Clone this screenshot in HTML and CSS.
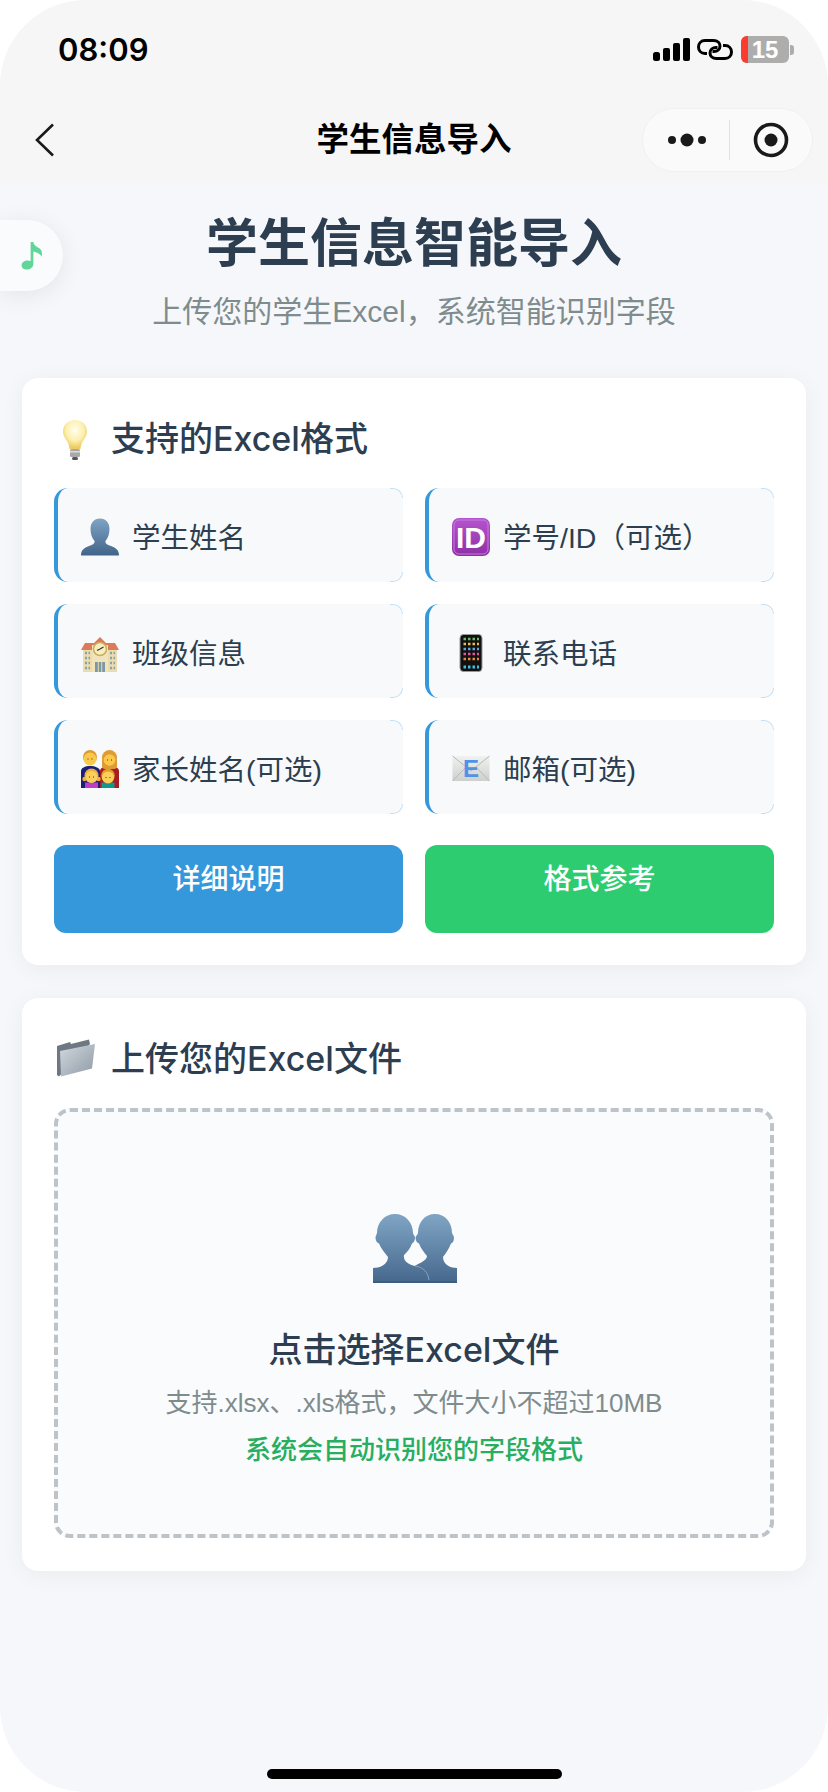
FILE: index.html
```html
<!DOCTYPE html>
<html lang="zh-CN">
<head>
    <meta charset="UTF-8">
    <meta name="viewport" content="width=device-width, initial-scale=1.0">
    <title>学生信息导入</title>
    <link rel="stylesheet" href="styles.css">
</head>
<body>
    <div class="phone">
        <div class="top-bar">
            <div class="status-bar">
                <span class="time">08:09</span>
                <div class="status-icons">
                    <svg class="signal" width="37" height="23" viewBox="0 0 37 23">
                        <rect x="0" y="14" width="7" height="9" rx="2.5" fill="#000"/>
                        <rect x="10" y="10" width="7" height="13" rx="2" fill="#000"/>
                        <rect x="20" y="5" width="7" height="18" rx="2" fill="#000"/>
                        <rect x="30" y="0" width="7" height="23" rx="2" fill="#000"/>
                    </svg>
                    <svg class="link" width="36" height="21" viewBox="0 0 36 21" fill="none" stroke="#000" stroke-width="3">
                        <path d="M10 14.500H8C4 14.500 1.500 11.500 1.500 8S4 1.500 8 1.500H16.500C20.500 1.500 23 4 23 7S20.500 12.500 17 12.500H15.500"/>
                        <path d="M26 6.500H28C32 6.500 34.500 9.500 34.500 13S32 19.500 28 19.500H19.500C15.500 19.500 13 17 13 14S15.500 8.500 19 8.500H20.500"/>
                    </svg>
                    <div class="battery"><span class="battery-low"></span><span class="battery-num">15</span></div>
                    <span class="battery-tip"></span>
                </div>
            </div>
            <div class="nav-bar">
                <svg class="back" width="20" height="34" viewBox="0 0 20 34" fill="none" stroke="#1a1a1a" stroke-width="2.6">
                    <path d="M18 1.500L2 17L18 32.500"/>
                </svg>
                <div class="nav-title">学生信息导入</div>
                <div class="capsule">
                    <div class="capsule-side">
                        <svg width="38" height="14" viewBox="0 0 38 14" fill="#1a1a1a">
                            <circle cx="4" cy="7" r="4"/><circle cx="19" cy="7" r="6.500"/><circle cx="34" cy="7" r="4"/>
                        </svg>
                    </div>
                    <div class="capsule-line"></div>
                    <div class="capsule-side">
                        <svg width="36" height="36" viewBox="0 0 36 36">
                            <circle cx="18" cy="18" r="15.500" fill="none" stroke="#1a1a1a" stroke-width="3.600"/>
                            <circle cx="18" cy="18" r="6.500" fill="#1a1a1a"/>
                        </svg>
                    </div>
                </div>
            </div>
        </div>

        <div class="music-btn">
            <svg width="22" height="29" viewBox="0 0 24 32" fill="#5fd69a">
                <path d="M10.500 1H13.500C14 5 17 6 20 8C23 10 23.500 13.500 22.500 17.500C21.500 14 18 12.500 13.500 11.500V25C13.500 29 10 31.500 6 31.500C2.500 31.500 0.500 29.500 0.500 27C0.500 23.500 4 21.500 7 21.500C8.500 21.500 9.500 21.700 10.500 22.200Z"/>
            </svg>
        </div>

        <div class="page">
            <h1 class="page-title">学生信息智能导入</h1>
            <p class="page-sub">上传您的学生Excel，系统智能识别字段</p>

            <section class="card">
                <div class="card-head">
                    <svg class="head-icon" width="38" height="42" viewBox="0 0 38 42">
                        <defs>
                            <radialGradient id="bulbGlow" cx="50%" cy="35%" r="60%">
                                <stop offset="0" stop-color="#fffef0"/><stop offset=".6" stop-color="#fdf0b0"/><stop offset="1" stop-color="#eecb62"/>
                            </radialGradient>
                        </defs>
                        <path d="M19 1C26 1 31 6 31 12.500C31 18 27 21 25.500 25C25 27 24.500 28.500 24.500 30H13.500C13.500 28.500 13 27 12.500 25C11 21 7 18 7 12.500C7 6 12 1 19 1Z" fill="url(#bulbGlow)"/>
                        <rect x="14" y="30" width="10" height="8" rx="1.500" fill="#a8a8a8"/>
                        <rect x="14" y="32" width="10" height="1.500" fill="#dcdcdc"/>
                        <rect x="16" y="38" width="6" height="3" rx="1.500" fill="#555"/>
                    </svg>
                    <h2>支持的Excel格式</h2>
                </div>
                <div class="field-grid">
                    <div class="field">
                        <svg class="field-icon" width="38" height="38" viewBox="0 0 38 38">
                            <defs>
                                <linearGradient id="bustFill" x1="0" y1="0" x2="0" y2="1">
                                    <stop offset="0" stop-color="#7fa4c4"/><stop offset="1" stop-color="#41648a"/>
                                </linearGradient>
                            </defs>
                            <path d="M19 0.500C25 0.500 28.500 5 28.500 11C28.500 16 27 20 24.500 23C24 25.500 26 26.500 30 28C35 30 38 32 38 37.500H0C0 32 3 30 8 28C12 26.500 14 25.500 13.500 23C11 20 9.500 16 9.500 11C9.500 5 13 0.500 19 0.500Z" fill="url(#bustFill)"/>
                        </svg>
                        <span>学生姓名</span>
                    </div>
                    <div class="field">
                        <svg class="field-icon" width="38" height="38" viewBox="0 0 38 38">
                            <defs>
                                <linearGradient id="idFill" x1="0" y1="0" x2="0" y2="1">
                                    <stop offset="0" stop-color="#b455cf"/><stop offset="1" stop-color="#8f2fa6"/>
                                </linearGradient>
                            </defs>
                            <rect width="38" height="38" rx="7" fill="url(#idFill)"/>
                            <rect x="2" y="2" width="34" height="34" rx="5" fill="none" stroke="#c77bdc" stroke-width="1"/>
                            <text class="id-text" x="19" y="29.500" text-anchor="middle">ID</text>
                        </svg>
                        <span>学号/ID（可选）</span>
                    </div>
                    <div class="field">
                        <svg class="field-icon" width="38" height="38" viewBox="0 -2 38 38">
                            <rect x="2" y="10" width="34" height="26" fill="#ebdcae"/>
                            <path d="M0 14L4 7H13L19 1L25 7H34L38 14Z" fill="#dd7a5a"/>
                            <rect x="11" y="9" width="16" height="27" fill="#f1e4bb"/>
                            <circle cx="19" cy="13" r="6.500" fill="#f7efc0" stroke="#c9ae5c" stroke-width="1.500"/>
                            <path d="M19 13L22.500 11M19 13L16 14.500" stroke="#333" stroke-width="1.200"/>
                            <rect x="14" y="26" width="10" height="10" fill="#7e97a6"/>
                            <path d="M17.300 26V36M20.700 26V36" stroke="#ebdcae" stroke-width="1"/>
                            <path d="M4 17H9M4 22H9M4 27H9M4 32H9M29 17H34M29 22H34M29 27H34M29 32H34" stroke="#8aa0ab" stroke-width="2.500" stroke-dasharray="2 1.500"/>
                        </svg>
                        <span>班级信息</span>
                    </div>
                    <div class="field">
                        <svg class="field-icon" width="38" height="38" viewBox="0 0 38 38">
                            <rect x="8" y="0.500" width="22" height="37" rx="3.500" fill="#111" stroke="#999" stroke-width="1"/>
                            <path d="M11.500 5H14M16 5H18.500M20.500 5H23M25 5H27" stroke="#6fb86a" stroke-width="2.500"/>
                            <path d="M11.500 10H14M16 10H18.500M20.500 10H23M25 10H27" stroke="#e6c04e" stroke-width="2.500"/>
                            <path d="M11.500 15H14M16 15H18.500M20.500 15H23M25 15H27" stroke="#5aa7e0" stroke-width="2.500"/>
                            <path d="M11.500 20H14M16 20H18.500M20.500 20H23M25 20H27" stroke="#e0579b" stroke-width="2.500"/>
                            <path d="M11.500 25H14M16 25H18.500M20.500 25H23M25 25H27" stroke="#e8873c" stroke-width="2.500"/>
                            <path d="M11.500 33H14M16 33H18.500M20.500 33H23M25 33H27" stroke="#43c0d8" stroke-width="3"/>
                        </svg>
                        <span>联系电话</span>
                    </div>
                    <div class="field">
                        <svg class="field-icon" width="38" height="38" viewBox="0 0 38 38">
                            <path d="M0 38V21C0 18 4 16 9 16S19 18 19 21V38Z" fill="#1c1f7a"/>
                            <path d="M19 38V21C19 18 23 16 28.500 16S38 18 38 21V38Z" fill="#a81d22"/>
                            <rect x="21" y="8" width="15" height="11" rx="3" fill="#de9a34"/>
                            <circle cx="9" cy="7" r="7" fill="#dd9a2e"/>
                            <circle cx="28.500" cy="7.500" r="7.500" fill="#de9a34"/>
                            <circle cx="9" cy="9" r="6.500" fill="#fbc94a"/>
                            <circle cx="28.500" cy="10" r="5.800" fill="#fbc94a"/>
                            <rect x="4" y="32.500" width="13" height="5.500" fill="#c03ec4"/>
                            <rect x="20.500" y="32.500" width="13" height="5.500" fill="#14968c"/>
                            <circle cx="3.500" cy="29" r="2.200" fill="#eeb039"/>
                            <circle cx="17.500" cy="29" r="2.200" fill="#eeb039"/>
                            <circle cx="10.500" cy="25.500" r="7" fill="#eeb039"/>
                            <circle cx="27" cy="25.500" r="6.800" fill="#e39c2e"/>
                            <circle cx="10.500" cy="27" r="6" fill="#fbd05a"/>
                            <circle cx="27" cy="27.500" r="6" fill="#fbd05a"/>
                            <path d="M6.500 9H7.500M10.500 9H11.500M26 10H27M30 10H31M8 27H9M12 27H13M24.500 27.500H25.500M28.500 27.500H29.500" stroke="#4a3420" stroke-width="1.200"/>
                        </svg>
                        <span>家长姓名(可选)</span>
                    </div>
                    <div class="field">
                        <svg class="field-icon" width="38" height="38" viewBox="0 0 38 38">
                            <defs>
                                <linearGradient id="envFill" x1="0" y1="0" x2="0" y2="1">
                                    <stop offset="0" stop-color="#f1f1f0"/><stop offset="1" stop-color="#cfcfce"/>
                                </linearGradient>
                            </defs>
                            <rect x="0.500" y="6" width="37" height="25" fill="url(#envFill)"/>
                            <path d="M0.500 6L19 21L37.500 6M0.500 31L14 17M37.500 31L24 17" fill="none" stroke="#b8b8b8" stroke-width="1"/>
                            <text class="env-text" x="19" y="27" text-anchor="middle">E</text>
                        </svg>
                        <span>邮箱(可选)</span>
                    </div>
                </div>
                <div class="btn-row">
                    <button class="btn btn-blue">详细说明</button>
                    <button class="btn btn-green">格式参考</button>
                </div>
            </section>

            <section class="card upload-card">
                <div class="card-head">
                    <svg class="head-icon" width="40" height="38" viewBox="0 0 40 38">
                        <defs>
                            <linearGradient id="folderFill" x1="0" y1="0" x2="1" y2="1">
                                <stop offset="0" stop-color="#d2d8de"/><stop offset="1" stop-color="#8f9aa6"/>
                            </linearGradient>
                        </defs>
                        <path d="M1 7L14 3L15 5L33 0.500L34 5L3 37.500L1 36Z" fill="#6d7883"/>
                        <path d="M4 12L39 5L36 29.500L5 37.500Z" fill="url(#folderFill)"/>
                    </svg>
                    <h2>上传您的Excel文件</h2>
                </div>
                <div class="drop-zone">
                    <svg class="drop-icon" width="84" height="69" viewBox="0 0 84 69">
                        <defs>
                            <linearGradient id="dropBust" x1="0" y1="0" x2="0" y2="1">
                                <stop offset="0" stop-color="#80a5c4"/><stop offset="1" stop-color="#45678c"/>
                            </linearGradient>
                        </defs>
                        <path d="M0 69V54C6 54 15 51 15 43C12 39 8 35 6 29.500C4 29 2.500 27 2.500 23L4 19C4 8 12 0 22 0C32 0 40 8 40 19L42.500 23L45 19C45 8 52 0 62 0C72 0 79 8 79 19L81 23C81 27 80 29 78 29.500C76 35 73 39 70 43C70 51 78 54 84 54V69Z" fill="url(#dropBust)"/>
                        <path d="M40 19L42 23C42 27 40.500 29 39 29.500C37 35 34 38 31 41C30 46 34 50 42 52C44 50 54 47 54 42C51 38 48 35 46 29.500C44 29 42.500 27 42.500 23L45 19Z" fill="#fafbfd"/>
                        <path d="M42 52C50 53 55 58 56 66" fill="none" stroke="#86a6c2" stroke-width="1"/>
                        <path d="M0 68H84" stroke="#3d5c80" stroke-width="2"/>
                    </svg>
                    <div class="drop-title">点击选择Excel文件</div>
                    <div class="drop-hint">支持.xlsx、.xls格式，文件大小不超过10MB</div>
                    <div class="drop-note">系统会自动识别您的字段格式</div>
                </div>
            </section>
        </div>

        <div class="home-bar"></div>
    </div>
</body>
</html>
```

FILE: styles.css
```css
* {
    box-sizing: border-box;
}
body {
    margin: 0;
    background-color: #fff;
    font-family: "Liberation Sans", "Noto Sans CJK SC", sans-serif;
    color: #2c3e50;
}
.phone {
    position: relative;
    width: 828px;
    height: 1792px;
    border-radius: 86px;
    overflow: hidden;
    background-color: #f6f7fb;
}
.top-bar {
    height: 183px;
    background-color: #f6f6f6;
}
.status-bar {
    height: 98px;
    padding: 36px 34px 0 58px;
    display: flex;
    justify-content: space-between;
}
.time {
    font-family: Inter, sans-serif;
    font-size: 31px;
    font-weight: 600;
    line-height: 27px;
    color: #000;
}
.status-icons {
    display: flex;
    align-items: flex-start;
}
.signal {
    margin-top: 2px;
    margin-right: 7px;
}
.link {
    margin-top: 3px;
    margin-right: 8px;
}
.battery {
    position: relative;
    width: 48px;
    height: 27px;
    border-radius: 6px;
    overflow: hidden;
    background-color: #adadad;
    display: flex;
    justify-content: center;
}
.battery-low {
    position: absolute;
    left: 0;
    top: 0;
    width: 7px;
    height: 27px;
    background-color: #ff3b30;
}
.battery-num {
    font-size: 24px;
    font-weight: 700;
    line-height: 27px;
    color: #fff;
}
.battery-tip {
    width: 4px;
    height: 10px;
    margin-top: 9px;
    margin-left: 1px;
    border-radius: 0 3px 3px 0;
    background-color: #adadad;
}
.nav-bar {
    height: 85px;
    padding: 10px 15px 11px 35px;
    display: flex;
    align-items: center;
    position: relative;
}
.nav-title {
    position: absolute;
    left: 0;
    right: 0;
    top: 20px;
    text-align: center;
    font-size: 32.5px;
    font-weight: 600;
    line-height: 44px;
    color: #000;
}
.capsule {
    margin-left: auto;
    width: 171px;
    height: 64px;
    padding-left: 3px;
    border-radius: 32px;
    background-color: #fafafa;
    border: 1px solid #f0f0f0;
    display: flex;
    align-items: center;
}
.capsule-side {
    flex: 1;
    display: flex;
    justify-content: center;
    align-items: center;
}
.capsule-line {
    width: 1px;
    height: 40px;
    background-color: #e2e2e2;
}
.music-btn {
    position: absolute;
    left: 0;
    top: 220px;
    width: 63px;
    height: 71px;
    padding-left: 21px;
    display: flex;
    align-items: center;
    border-radius: 0 36px 36px 0;
    background-color: #fafbfd;
    box-shadow: 0 4px 24px rgba(0, 0, 0, 0.08);
}
.page {
    padding: 33px 22px 0;
}
.page-title {
    margin: 0;
    text-align: center;
    font-size: 52px;
    font-weight: 700;
    line-height: 56px;
    color: #2c3e50;
}
.page-sub {
    margin: 22px 0 0;
    text-align: center;
    font-size: 30px;
    line-height: 36px;
    color: #7f8c8d;
}
.card {
    margin-top: 48px;
    padding: 37px 32px 32px;
    border-radius: 16px;
    background-color: #fff;
    box-shadow: 0 4px 24px rgba(0, 0, 0, 0.05);
}
.upload-card {
    margin-top: 33px;
    padding-bottom: 33px;
}
.card-head {
    height: 46px;
    padding-top: 2px;
    display: flex;
    align-items: center;
    margin-bottom: 27px;
    position: relative;
    padding-left: 57px;
}
.card-head h2 {
    margin: 0;
    font-family: Inter, "Noto Sans CJK SC", sans-serif;
    font-size: 34px;
    font-weight: 500;
    line-height: 44px;
}
.head-icon {
    position: absolute;
    left: 2px;
    top: 4px;
}
.field-grid {
    display: grid;
    grid-template-columns: 349px 349px;
    gap: 22px;
}
.field {
    position: relative;
    height: 94px;
    padding-left: 23px;
    display: flex;
    align-items: center;
    border-left: 4px solid #3498db;
    border-radius: 14px;
    background-color: #f8f9fa;
    font-size: 28.5px;
}
.field::before,
.field::after {
    content: "";
    position: absolute;
    right: 0;
    width: 12px;
    height: 9px;
    border-right: 1px solid #c4e0f4;
}
.field::before {
    top: 0;
    border-top: 1px solid #c4e0f4;
    border-top-right-radius: 14px;
}
.field::after {
    bottom: 0;
    border-bottom: 1px solid #c4e0f4;
    border-bottom-right-radius: 14px;
}
.field-icon {
    margin-top: 4px;
    margin-right: 13px;
    flex-shrink: 0;
}
.id-text {
    font-family: "Liberation Sans", sans-serif;
    font-size: 30px;
    font-weight: 700;
    fill: #fff;
}
.env-text {
    font-family: "Liberation Sans", sans-serif;
    font-size: 24px;
    font-weight: 700;
    fill: #4f93e6;
}
.btn-row {
    display: grid;
    grid-template-columns: 349px 349px;
    gap: 22px;
    margin-top: 31px;
}
.btn {
    height: 88px;
    padding: 0 0 18px;
    border: none;
    border-radius: 12px;
    font-family: inherit;
    font-size: 28px;
    font-weight: 500;
    line-height: 38px;
    color: #fff;
    text-align: center;
}
.btn-blue {
    background-color: #3498db;
}
.btn-green {
    background-color: #2ecc71;
}
.drop-zone {
    height: 430px;
    padding-top: 102px;
    border: 4px dashed #bdc3c7;
    border-radius: 16px;
    background-color: #fafbfd;
    text-align: center;
}
.drop-icon {
    display: block;
    margin: 0 auto;
    transform: translateX(1px);
}
.drop-title {
    margin-top: 45px;
    font-family: Inter, "Noto Sans CJK SC", sans-serif;
    font-size: 34px;
    font-weight: 500;
    line-height: 44px;
}
.drop-hint {
    margin-top: 13px;
    font-size: 26px;
    line-height: 36px;
    color: #7f8c8d;
}
.drop-note {
    margin-top: 11px;
    font-size: 26px;
    line-height: 36px;
    font-weight: 500;
    color: #27ae60;
}
.home-bar {
    position: absolute;
    left: 267px;
    bottom: 13px;
    width: 295px;
    height: 10px;
    border-radius: 5px;
    background-color: #000;
}
```
